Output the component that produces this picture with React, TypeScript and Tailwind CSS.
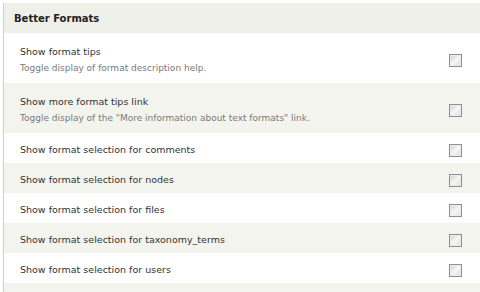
import React from 'react';

interface Setting {
  label: string;
  help?: string;
}

const settings: Setting[] = [
  { label: 'Show format tips', help: 'Toggle display of format description help.' },
  { label: 'Show more format tips link', help: 'Toggle display of the "More information about text formats" link.' },
  { label: 'Show format selection for comments' },
  { label: 'Show format selection for nodes' },
  { label: 'Show format selection for files' },
  { label: 'Show format selection for taxonomy_terms' },
  { label: 'Show format selection for users' },
];

const Checkbox: React.FC = () => (
  <span className="block mt-[4px] w-[13px] h-[13px] border border-[#8f8f8f] bg-gradient-to-br from-[#cfcfcf] via-[#f6f6f6] to-[#dcdcdc] shadow-[inset_0_0_0_1px_#ececec]" />
);

const App: React.FC = () => {
  return (
    <div
      className="w-[480px] h-[292px] overflow-hidden bg-white pt-[3px] pl-[3px] text-[#333]"
      style={{ fontFamily: '"DejaVu Sans", Verdana, sans-serif' }}
    >
      <div className="border-l border-[#cfcfcf] h-full">
        <div className="h-[30px] flex items-center pl-[10px] bg-[#f0f0ea] text-[10px] font-bold text-[#222]">
          Better Formats
        </div>
        {settings.map((s, i) => (
          <div
            key={s.label}
            className={
              'flex items-center justify-between pl-[16px] pr-[18px] ' +
              (s.help ? 'h-[50px] ' : 'h-[30px] ') +
              (i % 2 === 0 ? 'bg-white' : 'bg-[#f3f4ee]')
            }
          >
            <div className="flex flex-col gap-[5px] pt-[4px]">
              <span className="text-[9.5px] leading-[12px]">{s.label}</span>
              {s.help && <span className="text-[9px] leading-[11px] text-[#7a7a7a]">{s.help}</span>}
            </div>
            <Checkbox />
          </div>
        ))}
        <div className="h-[30px] bg-[#f3f4ee]" />
      </div>
    </div>
  );
};

export default App;
